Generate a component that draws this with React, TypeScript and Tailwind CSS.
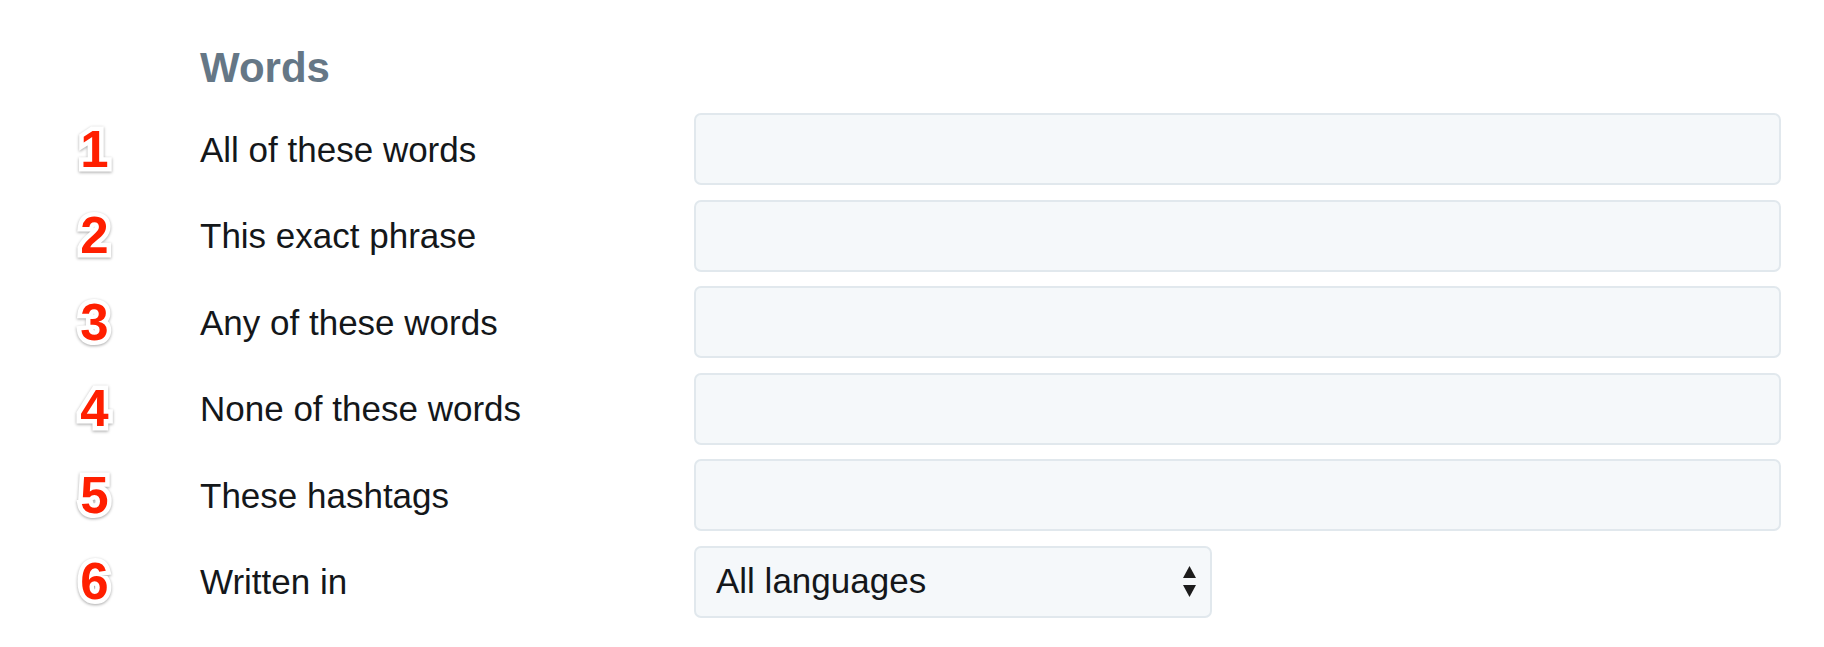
const rows = [
  { n: '1', label: 'All of these words' },
  { n: '2', label: 'This exact phrase' },
  { n: '3', label: 'Any of these words' },
  { n: '4', label: 'None of these words' },
  { n: '5', label: 'These hashtags' },
];

function Badge({ n }: { n: string }) {
  return (
    <div className="w-[189px] shrink-0 text-center">
      <span className="inline-block text-[51px] font-bold leading-none text-[#ff1f00] [-webkit-text-stroke:9px_white] [paint-order:stroke_fill] drop-shadow-[0_1px_1.5px_rgba(0,0,0,0.35)]">
        {n}
      </span>
    </div>
  );
}

function Label({ children }: { children: string }) {
  return (
    <div className="w-[505px] shrink-0 pl-[11px] text-[35px] leading-none text-[#14171a]">{children}</div>
  );
}

export default function App() {
  return (
    <div className="min-h-[647px] w-full bg-white pt-[47px] pr-[43px] font-['Liberation_Sans',Arial,sans-serif]">
      <h2 className="pl-[200px] text-[42px] font-bold leading-[42px] text-[#657786]">Words</h2>
      <div className="mt-[24px] flex flex-col gap-[14.5px]">
        {rows.map((r) => (
          <div key={r.n} className="flex h-[72px] items-center">
            <Badge n={r.n} />
            <Label>{r.label}</Label>
            <input
              type="text"
              className="h-full flex-1 rounded-[7px] border-2 border-[#e1e8ed] bg-[#f5f8fa] px-5 text-[34px] outline-none"
            />
          </div>
        ))}
        <div className="flex h-[72px] items-center">
          <Badge n="6" />
          <Label>Written in</Label>
          <div className="relative h-full w-[518px]">
            <select className="h-full w-full appearance-none rounded-[7px] border-2 border-[#e1e8ed] bg-[#f5f8fa] pl-[20px] text-[35px] text-[#14171a] outline-none">
              <option>All languages</option>
            </select>
            <svg
              className="pointer-events-none absolute right-[16px] top-1/2 -translate-y-1/2"
              width="13"
              height="32"
              viewBox="0 0 13 32"
            >
              <path d="M6.5 0 L13 12 L0 12 Z" fill="#1c1c1c" />
              <path d="M0 19 L13 19 L6.5 31 Z" fill="#1c1c1c" />
            </svg>
          </div>
        </div>
      </div>
    </div>
  );
}
